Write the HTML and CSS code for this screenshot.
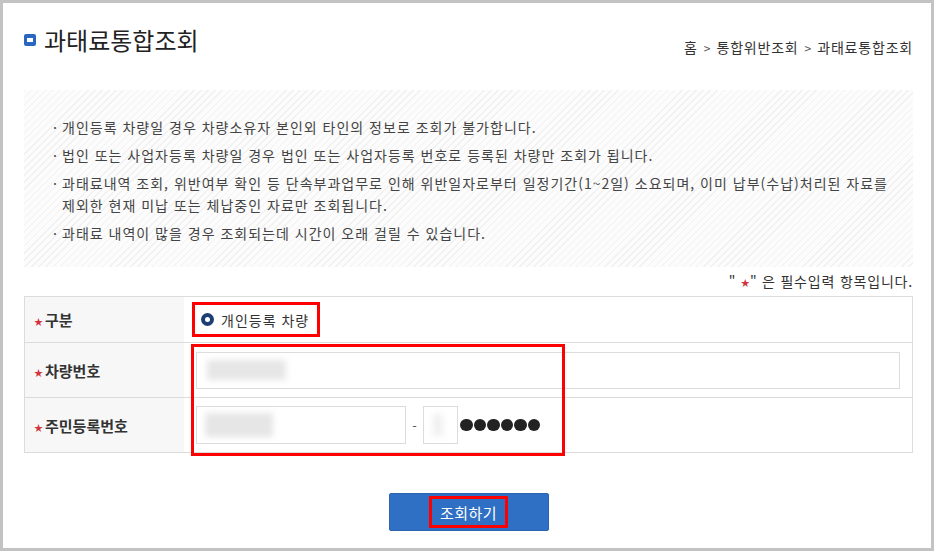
FILE: index.html
```html
<!DOCTYPE html>
<html lang="ko">
<head>
<meta charset="utf-8">
<title>과태료통합조회</title>
<link rel="stylesheet" href="styles.css">
</head>
<body>
<div class="frame">
  <div class="head">
    <h1 class="title"><span class="title-icon"></span>과태료통합조회</h1>
    <div class="crumb">홈<span class="sep">&gt;</span>통합위반조회<span class="sep">&gt;</span>과태료통합조회</div>
  </div>

  <ul class="notice">
    <li>개인등록 차량일 경우 차량소유자 본인외 타인의 정보로 조회가 불가합니다.</li>
    <li>법인 또는 사업자등록 차량일 경우 법인 또는 사업자등록 번호로 등록된 차량만 조회가 됩니다.</li>
    <li>과태료내역 조회, 위반여부 확인 등 단속부과업무로 인해 위반일자로부터 일정기간(1~2일) 소요되며, 이미 납부(수납)처리된 자료를 제외한 현재 미납 또는 체납중인 자료만 조회됩니다.</li>
    <li>과태료 내역이 많을 경우 조회되는데 시간이 오래 걸릴 수 있습니다.</li>
  </ul>

  <p class="req-note">" <span class="star">★</span>" 은 필수입력 항목입니다.</p>

  <table class="form">
    <tr class="r1">
      <th><span class="star">★</span>구분</th>
      <td>
        <label class="radio-box"><span class="radio"></span>개인등록 차량</label>
      </td>
    </tr>
    <tr class="r2">
      <th><span class="star">★</span>차량번호</th>
      <td>
        <div class="input wide"><span class="blur b1"></span></div>
      </td>
    </tr>
    <tr class="r3">
      <th><span class="star">★</span>주민등록번호</th>
      <td>
        <div class="ssn">
          <div class="input first"><span class="blur b2"></span></div>
          <span class="dash">-</span>
          <div class="input second"><span class="blur b3"></span></div>
          <span class="dots"><i></i><i></i><i></i><i></i><i></i><i></i></span>
        </div>
      </td>
    </tr>
  </table>

  <div class="actions">
    <button class="btn" type="button"><span class="btn-mark">조회하기</span></button>
  </div>

  <div class="highlight"></div>
</div>
</body>
</html>
```

FILE: styles.css
```css
* { box-sizing: border-box; }
html, body { margin: 0; padding: 0; background: #fff; }
body {
  font-family: "Noto Sans CJK KR", "Noto Sans", sans-serif;
  color: #333;
  font-size: 14px;
}
.frame {
  position: relative;
  width: 934px;
  height: 551px;
  border: 3px solid #c3c3c3;
  padding: 22px 18px 0 21px;
  background: #fff;
  overflow: hidden;
}
.head {
  display: flex;
  justify-content: space-between;
  align-items: flex-start;
  height: 30px;
}
.title {
  margin: 0;
  font-size: 24px;
  font-weight: 400;
  line-height: 30px;
  color: #222;
  display: flex;
  align-items: center;
}
.title-icon {
  width: 12px;
  height: 12px;
  background: #2a68c0;
  border-radius: 2px;
  margin-right: 8px;
  display: inline-flex;
  align-items: center;
  justify-content: center;
}
.title-icon::after {
  content: "";
  width: 6px;
  height: 4px;
  background: #fff;
}
.crumb {
  padding-top: 12px;
  font-size: 14px;
  letter-spacing: 0.8px;
  line-height: 20px;
  color: #333;
}
.sep { margin: 0 6px; font-size: 12px; color: #555; letter-spacing: 0; }

.notice {
  list-style: none;
  margin: 35px 0 0 0;
  padding: 26px 15px 23px 29px;
  background: repeating-linear-gradient(135deg, #f1f1f1 0 1px, #fcfcfc 1px 5px);
  font-size: 14px;
  letter-spacing: 1px;
  line-height: 22px;
  color: #444;
  word-break: keep-all;
}
.notice li { display: flex; margin-top: 6px; }
.notice li:first-child { margin-top: 0; }
.notice li::before { content: "·"; width: 9px; flex-shrink: 0; letter-spacing: 0; }

.req-note {
  margin: 4px 0 0 0;
  text-align: right;
  font-size: 14px;
  letter-spacing: 0.8px;
  line-height: 20px;
  color: #333;
}
.star { color: #d0353f; font-size: 9px; vertical-align: 1px; letter-spacing: 0; }

.form {
  margin-top: 3px;
  width: 100%;
  border-collapse: collapse;
  border: 1px solid #dcdcdc;
}
.form th, .form td {
  border-top: 1px solid #dcdcdc;
  padding: 0;
  vertical-align: middle;
}
.form th {
  width: 160px;
  background: #f7f7f7;
  text-align: left;
  padding-left: 9px;
  font-size: 15px;
  font-weight: 700;
  color: #333;
}
.form th .star { margin-right: 2px; }
.r1 th, .r1 td { height: 46px; }
.r2 th, .r2 td { height: 55px; }
.r3 th, .r3 td { height: 55px; }
.form td { padding: 0 12px 0 12px; }

.radio-box {
  display: inline-flex;
  align-items: center;
  border: 3px solid #f00;
  height: 35px;
  padding: 0 8px 0 6px;
  margin-left: -4px;
  font-size: 14px;
  letter-spacing: 1px;
  color: #333;
}
.radio {
  width: 13px;
  height: 13px;
  border-radius: 50%;
  background: #1d3e73;
  margin-right: 7px;
  display: inline-flex;
  align-items: center;
  justify-content: center;
}
.radio::after {
  content: "";
  width: 5px;
  height: 5px;
  border-radius: 50%;
  background: #fff;
}

.input {
  border: 1px solid #dcdcdc;
  background: #fff;
  height: 37px;
  display: flex;
  align-items: center;
}
.input.wide { width: 704px; padding-left: 10px; }
.ssn { display: flex; align-items: center; }
.input.first { width: 210px; height: 38px; padding-left: 8px; }
.input.second { width: 35px; height: 38px; padding-left: 9px; }
.dash { width: 17px; text-align: center; font-size: 13px; color: #555; }
.blur { display: block; background: #e6e6e6; filter: blur(3px); }
.b1 { width: 79px; height: 20px; }
.b2 { width: 68px; height: 24px; }
.b3 { width: 10px; height: 22px; background: #f0f0f0; }
.dots { display: flex; margin-left: 2px; }
.dots i {
  width: 12.5px;
  height: 12.5px;
  border-radius: 50%;
  background: #222;
  margin-right: 1px;
}

.actions {
  display: flex;
  justify-content: center;
  margin-top: 40px;
}
.btn {
  width: 160px;
  height: 38px;
  background: #2f6fc4;
  border: 1px solid #2a62ad;
  border-radius: 2px;
  padding: 0;
  display: flex;
  align-items: center;
  justify-content: center;
  font-family: inherit;
  font-size: 15px;
  letter-spacing: 0.5px;
  color: #fff;
  cursor: pointer;
}
.btn-mark {
  border: 3px solid #f00;
  height: 32px;
  width: 79px;
  display: flex;
  align-items: center;
  justify-content: center;
}

.highlight {
  position: absolute;
  left: 188px;
  top: 341px;
  width: 374px;
  height: 112px;
  border: 3px solid #f00;
  pointer-events: none;
}
```
